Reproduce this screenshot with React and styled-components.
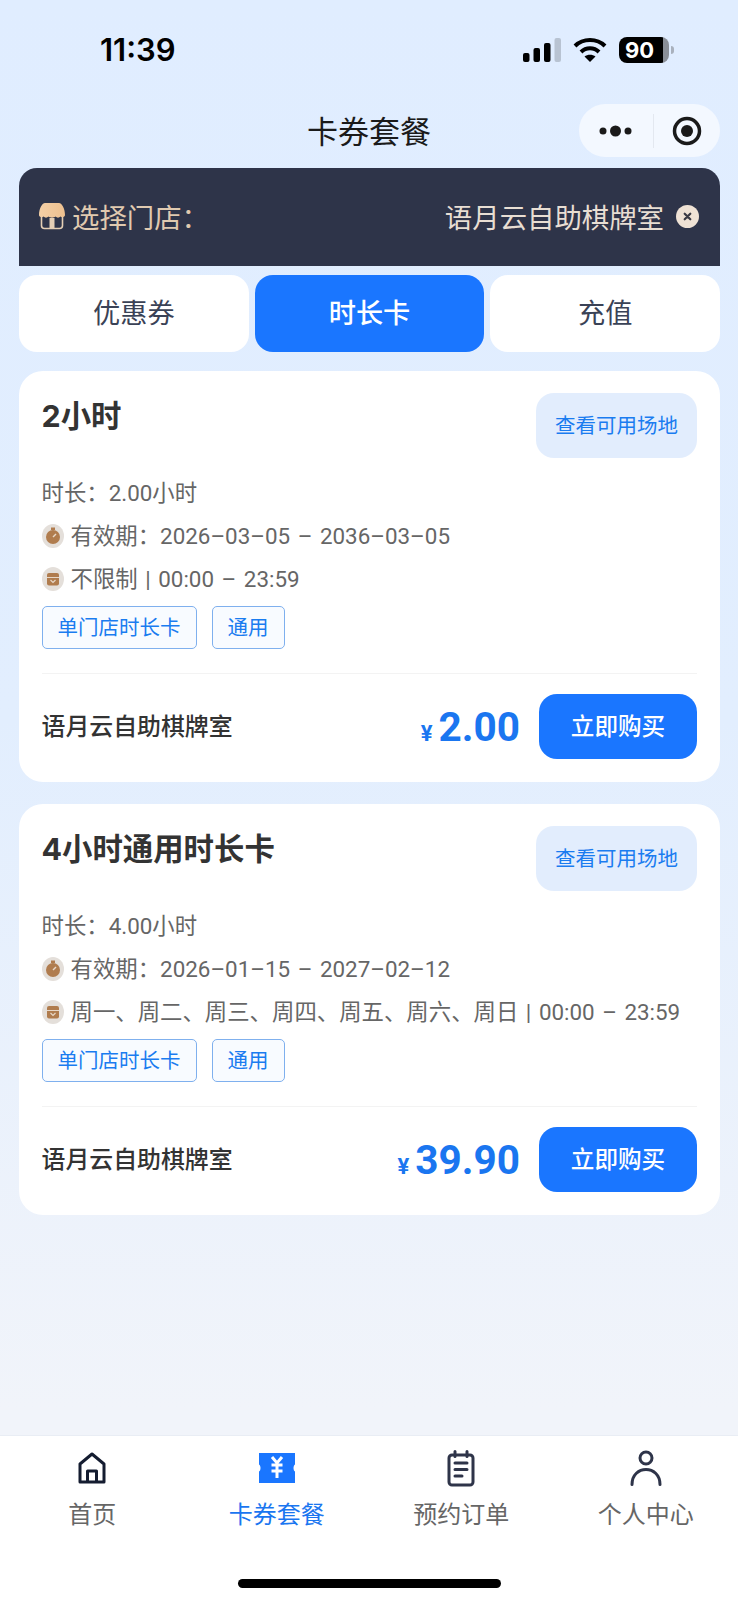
import React from "react";
import styled, { createGlobalStyle } from "styled-components";

const GlobalStyle = createGlobalStyle`
  html, body { margin: 0; padding: 0; }
  body { font-family: "Inter", "Noto Sans CJK SC", sans-serif; }
  * { box-sizing: border-box; }
`;

const Page = styled.div`
  width: 738px;
  height: 1600px;
  display: flex;
  flex-direction: column;
  background: linear-gradient(180deg, #e0edff 0%, #e2eefe 45%, #f1f4fa 88%);
  overflow: hidden;
`;

const StatusBar = styled.div`
  height: 104px;
  padding: 32px 64px 0 100px;
  display: flex;
  justify-content: space-between;
  align-items: flex-start;
`;

const Clock = styled.div`
  font-size: 31px;
  line-height: 36px;
  font-weight: 600;
  color: #000;
`;

const StatusIcons = styled.div`
  display: flex;
  align-items: center;
  height: 36px;
  gap: 12px;
`;

const Battery = styled.div`
  position: relative;
  width: 50px;
  height: 26px;
  margin-right: 5px;
  border-radius: 8px;
  background: linear-gradient(90deg, #000 0 88%, #8a8f98 88% 100%);
  color: #fff;
  font-size: 22px;
  line-height: 26px;
  font-weight: 700;
  padding-left: 6px;
  &::after {
    content: "";
    position: absolute;
    right: -5px;
    top: 9px;
    width: 3px;
    height: 8px;
    border-radius: 0 3px 3px 0;
    background: #a9b1bd;
  }
`;

const NavBar = styled.div`
  position: relative;
  height: 53px;
  margin-bottom: 11px;
  padding-bottom: 3px;
  display: flex;
  align-items: center;
  justify-content: center;
  font-size: 31px;
  color: #1a1a1a;
`;

const Capsule = styled.div`
  position: absolute;
  right: 18px;
  top: 0;
  width: 141px;
  height: 53px;
  border-radius: 27px;
  background: #f3f8ff;
  display: flex;
  align-items: center;
`;

const CapsulePart = styled.div`
  width: ${({ $divided }) => ($divided ? "67px" : "74px")};
  height: 34px;
  display: flex;
  align-items: center;
  justify-content: center;
  border-left: ${({ $divided }) => ($divided ? "1px solid #e3e8f0" : "none")};
`;

const Main = styled.div`
  flex: 1;
  padding: 0 18px 0 19px;
  display: flex;
  flex-direction: column;
`;

const StoreBar = styled.div`
  height: 98px;
  border-radius: 18px 18px 0 0;
  background: #2e3449;
  padding: 0 21px 0 20px;
  display: flex;
  align-items: center;
  justify-content: space-between;
  font-size: 27.4px;
`;

const StoreLabel = styled.div`
  display: flex;
  align-items: center;
  gap: 7px;
  color: #e0cab0;
  padding-bottom: 2px;
`;

const StoreValue = styled.div`
  display: flex;
  align-items: center;
  gap: 12px;
  color: #e8ded3;
  padding-bottom: 2px;
`;

const Tabs = styled.div`
  margin-top: 9px;
  display: grid;
  grid-template-columns: repeat(3, 1fr);
  gap: 6px;
`;

const Tab = styled.div`
  height: 77px;
  padding-bottom: 5px;
  border-radius: 18px;
  display: flex;
  align-items: center;
  justify-content: center;
  font-size: 27.2px;
  font-weight: ${({ $active }) => ($active ? 500 : 400)};
  color: ${({ $active }) => ($active ? "#fff" : "#3a4256")};
  background: ${({ $active }) => ($active ? "#1a76ff" : "#fff")};
`;

const CardList = styled.div`
  margin-top: 19px;
  display: flex;
  flex-direction: column;
  gap: 22px;
`;

const Card = styled.div`
  height: 411px;
  border-radius: 24px;
  background: #fff;
  padding: 22px 23px 0 22.5px;
`;

const CardHead = styled.div`
  display: flex;
  justify-content: space-between;
  align-items: flex-start;
  height: 65px;
`;

const CardTitle = styled.div`
  font-size: 30.4px;
  line-height: 46px;
  font-weight: 700;
  color: #333;
`;

const ViewButton = styled.div`
  width: 161px;
  height: 65px;
  padding-bottom: 4px;
  border-radius: 18px;
  background: #e2edfd;
  color: #1a7cf0;
  font-size: 20.5px;
  display: flex;
  align-items: center;
  justify-content: center;
`;

const InfoRows = styled.div`
  margin-top: 18px;
  display: flex;
  flex-direction: column;
  gap: 13px;
`;

const InfoRow = styled.div`
  height: 30px;
  display: flex;
  align-items: center;
  gap: 7px;
  font-family: "Roboto", "Noto Sans CJK SC", sans-serif;
  font-size: 22.4px;
  word-spacing: 2px;
  color: #666;
  white-space: nowrap;
  svg {
    margin-top: 3px;
  }
`;

const Tags = styled.div`
  margin-top: 14px;
  display: flex;
  gap: 15px;
`;

const Tag = styled.div`
  height: 43px;
  padding: 0 15px 3px;
  border: 1px solid #7fb0ee;
  border-radius: 5px;
  background: #f8fbff;
  color: #1a7cf0;
  font-size: 20.5px;
  display: flex;
  align-items: center;
`;

const CardFoot = styled.div`
  margin-top: 24px;
  padding-top: 20px;
  border-top: 1px solid #f3f3f3;
  display: flex;
  align-items: center;
`;

const ShopName = styled.div`
  flex: 1;
  font-size: 23.9px;
  font-weight: 500;
  color: #333;
  padding-bottom: 4px;
`;

const Price = styled.div`
  display: flex;
  align-items: baseline;
  gap: 6px;
  font-family: "Roboto", "Noto Sans CJK SC", sans-serif;
  color: #1a76f0;
  font-size: 40.5px;
  font-weight: 700;
  margin-right: 19px;
`;

const Yen = styled.span`
  font-size: 22px;
`;

const BuyButton = styled.div`
  width: 158px;
  height: 65px;
  padding-bottom: 3px;
  border-radius: 18px;
  background: #1a76ff;
  color: #fff;
  font-size: 23.6px;
  font-weight: 500;
  display: flex;
  align-items: center;
  justify-content: center;
`;

const TabBar = styled.div`
  position: relative;
  height: 165px;
  background: #fff;
  border-top: 1px solid #e9edf4;
  display: grid;
  grid-template-columns: repeat(4, 1fr);
  padding: 12px 0 0;
  align-items: start;
`;

const TabItem = styled.div`
  display: flex;
  flex-direction: column;
  align-items: center;
  gap: 11px;
  font-size: 24px;
  line-height: 32px;
  color: ${({ $active }) => ($active ? "#1a76f0" : "#666")};
`;

const IconSlot = styled.div`
  height: 40px;
  display: flex;
  align-items: center;
  justify-content: center;
`;

const HomeBar = styled.div`
  position: absolute;
  left: 238px;
  bottom: 12px;
  width: 263px;
  height: 9px;
  border-radius: 5px;
  background: #000;
`;

const Signal = () => (
  <svg width="38" height="24" viewBox="0 0 38 24">
    <rect x="0" y="15" width="6.500" height="9" rx="2" fill="#000" />
    <rect x="10.500" y="10" width="6.500" height="14" rx="2" fill="#000" />
    <rect x="21" y="5" width="6.500" height="19" rx="2" fill="#000" />
    <rect x="31.500" y="0" width="6.500" height="24" rx="2" fill="#b8c3d2" />
  </svg>
);

const Wifi = () => (
  <svg width="34" height="26" viewBox="0 0 34 26" fill="none" stroke="#000" strokeWidth="4">
    <path d="M2 9C10 1 24 1 32 9" />
    <path d="M8 15C13 10 21 10 26 15" />
    <path d="M17 25l-5.500-5.500C14.500 17 19.500 17 22.500 19.500Z" fill="#000" stroke="none" />
  </svg>
);

const MoreDots = () => (
  <svg width="34" height="14" viewBox="0 0 34 14" fill="#1a1a1a">
    <circle cx="4" cy="7" r="3.500" />
    <circle cx="16.500" cy="7" r="5.500" />
    <circle cx="29" cy="7" r="3.500" />
  </svg>
);

const Target = () => (
  <svg width="30" height="30" viewBox="0 0 30 30">
    <circle cx="15" cy="15" r="12.500" fill="none" stroke="#1a1a1a" strokeWidth="3.500" />
    <circle cx="15" cy="15" r="6" fill="#1a1a1a" />
  </svg>
);

const StoreIcon = () => (
  <svg width="26" height="28" viewBox="0 0 26 28">
    <defs>
      <linearGradient id="awning" x1="0" y1="0" x2="1" y2="0">
        <stop offset="0" stopColor="#f3cfa6" />
        <stop offset="1" stopColor="#eec08f" />
      </linearGradient>
    </defs>
    <rect x="2.500" y="10" width="21" height="16.500" rx="3" fill="none" stroke="#e5cfb5" strokeWidth="1.600" />
    <rect x="10.500" y="16" width="5" height="10" fill="#e5cfb5" />
    <path d="M6 1h14c3 0 6 6 6 12 0 2-3 3-4.500 1.500C20 16 18 16 16.500 14.500 15 16 11 16 9.500 14.500 8 16 6 16 4.500 14.500 3 16 0 15 0 13 0 7 3 1 6 1Z" fill="url(#awning)" />
  </svg>
);

const ClearIcon = () => (
  <svg width="23" height="23" viewBox="0 0 23 23">
    <circle cx="11.500" cy="11.500" r="11.500" fill="#efe2d5" />
    <path d="M8.700 8.700l5.600 5.600M14.300 8.700l-5.600 5.600" stroke="#3a3a44" strokeWidth="2.200" strokeLinecap="round" />
  </svg>
);

const TimerBadge = () => (
  <svg width="22" height="24" viewBox="0 0 22 24">
    <ellipse cx="11" cy="12" rx="11" ry="12" fill="#e4dfda" />
    <circle cx="11" cy="13" r="7" fill="#b07c4e" />
    <rect x="9" y="3.500" width="4" height="2.500" fill="#b07c4e" />
    <path d="M11 13l3-3" stroke="#e8d8c8" strokeWidth="1.400" />
  </svg>
);

const CalendarBadge = () => (
  <svg width="22" height="24" viewBox="0 0 22 24">
    <ellipse cx="11" cy="12" rx="11" ry="12" fill="#e4dfda" />
    <rect x="5" y="6" width="12" height="12.500" rx="2" fill="#b07c4e" />
    <path d="M5 10.500h12" stroke="#e8d8c8" strokeWidth="1" />
    <path d="M8.500 13l2.500 2.500 2.500-2.500" fill="none" stroke="#e8d8c8" strokeWidth="1.200" />
  </svg>
);

const HomeIcon = () => (
  <svg width="28" height="32" viewBox="0 0 28 32" fill="none" stroke="#141c30" strokeWidth="3" strokeLinejoin="round">
    <path d="M2 12L14 2l12 10v18H2Z" />
    <path d="M9.500 30V19h9v11" />
  </svg>
);

const TicketIcon = () => (
  <svg width="36" height="30" viewBox="0 0 36 30">
    <path d="M0 0h36v11.500c-2 1-2 6 0 7v11.500H0V18.500c2-1 2-6 0-7Z" fill="#1a76ff" />
    <path d="M13 4l5 6 5-6M18 10v15M12.500 12h11M12.500 18h11" fill="none" stroke="#fff" strokeWidth="3" />
  </svg>
);

const OrderIcon = () => (
  <svg width="28" height="37" viewBox="0 0 28 37" fill="none" stroke="#2e3449" strokeWidth="3" strokeLinecap="round">
    <rect x="2" y="5" width="24" height="30" rx="3" />
    <path d="M8 1.500v5M20 1.500v5M8 13h12M8 19.500h12M8 26h7" />
  </svg>
);

const UserIcon = () => (
  <svg width="32" height="36" viewBox="0 0 32 36" fill="none" stroke="#2e3449" strokeWidth="3" strokeLinecap="round">
    <circle cx="16" cy="8" r="6" />
    <path d="M2 34.500c0-20 28-20 28 0" />
  </svg>
);

const cards = [
  {
    title: "2小时",
    duration: "时长\uFF1A2.00小时",
    validity: "有效期\uFF1A2026–03–05 – 2036–03–05",
    hours: "不限制 | 00:00 – 23:59",
    price: "2.00",
  },
  {
    title: "4小时通用时长卡",
    duration: "时长\uFF1A4.00小时",
    validity: "有效期\uFF1A2026–01–15 – 2027–02–12",
    hours: "周一、周二、周三、周四、周五、周六、周日 | 00:00 – 23:59",
    price: "39.90",
  },
];

const navItems = [
  { label: "首页", icon: <HomeIcon /> },
  { label: "卡券套餐", icon: <TicketIcon />, active: true },
  { label: "预约订单", icon: <OrderIcon /> },
  { label: "个人中心", icon: <UserIcon /> },
];

export default function App() {
  return (
    <Page>
      <GlobalStyle />
      <StatusBar>
        <Clock>11:39</Clock>
        <StatusIcons>
          <Signal />
          <Wifi />
          <Battery>90</Battery>
        </StatusIcons>
      </StatusBar>
      <NavBar>
        卡券套餐
        <Capsule>
          <CapsulePart><MoreDots /></CapsulePart>
          <CapsulePart $divided><Target /></CapsulePart>
        </Capsule>
      </NavBar>
      <Main>
        <StoreBar>
          <StoreLabel>
            <StoreIcon />
            选择门店{"\uFF1A"}
          </StoreLabel>
          <StoreValue>
            语月云自助棋牌室
            <ClearIcon />
          </StoreValue>
        </StoreBar>
        <Tabs>
          <Tab>优惠券</Tab>
          <Tab $active>时长卡</Tab>
          <Tab>充值</Tab>
        </Tabs>
        <CardList>
          {cards.map((card) => (
            <Card key={card.title}>
              <CardHead>
                <CardTitle>{card.title}</CardTitle>
                <ViewButton>查看可用场地</ViewButton>
              </CardHead>
              <InfoRows>
                <InfoRow>{card.duration}</InfoRow>
                <InfoRow><TimerBadge />{card.validity}</InfoRow>
                <InfoRow><CalendarBadge />{card.hours}</InfoRow>
              </InfoRows>
              <Tags>
                <Tag>单门店时长卡</Tag>
                <Tag>通用</Tag>
              </Tags>
              <CardFoot>
                <ShopName>语月云自助棋牌室</ShopName>
                <Price><Yen>¥</Yen>{card.price}</Price>
                <BuyButton>立即购买</BuyButton>
              </CardFoot>
            </Card>
          ))}
        </CardList>
      </Main>
      <TabBar>
        {navItems.map((item) => (
          <TabItem key={item.label} $active={item.active}>
            <IconSlot>{item.icon}</IconSlot>
            {item.label}
          </TabItem>
        ))}
        <HomeBar />
      </TabBar>
    </Page>
  );
}
